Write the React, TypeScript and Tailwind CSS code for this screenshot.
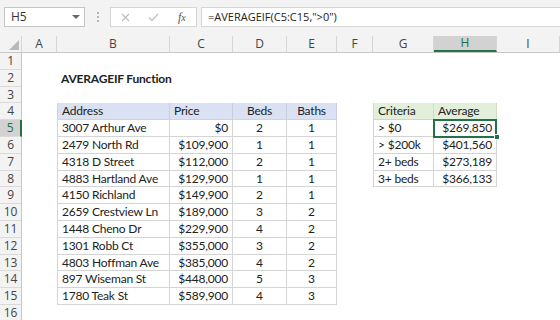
import React from "react";

const W = [22, 35, 113, 63, 54, 50, 36, 61, 63, 63];
const LETTERS = ["A", "B", "C", "D", "E", "F", "G", "H", "I"];

const data: [string, string, string, string][] = [
  ["3007 Arthur Ave", "$0", "2", "1"],
  ["2479 North Rd", "$109,900", "1", "1"],
  ["4318 D Street", "$112,000", "2", "1"],
  ["4883 Hartland Ave", "$129,900", "1", "1"],
  ["4150 Richland", "$149,900", "2", "1"],
  ["2659 Crestview Ln", "$189,000", "3", "2"],
  ["1448 Cheno Dr", "$229,900", "4", "2"],
  ["1301 Robb Ct", "$355,000", "3", "2"],
  ["4803 Hoffman Ave", "$385,000", "4", "2"],
  ["897 Wiseman St", "$448,000", "5", "3"],
  ["1780 Teak St", "$589,900", "4", "3"],
];

const crit: [string, string][] = [
  ["> $0", "$269,850"],
  ["> $200k", "$401,560"],
  ["2+ beds", "$273,189"],
  ["3+ beds", "$366,133"],
];

const font = { fontFamily: "Lato, 'Open Sans', sans-serif", letterSpacing: "-0.2px" };
const uiFont = { fontFamily: "'Open Sans', 'Noto Sans', sans-serif" };

const SHORT = new Set([3, 8, 13]);

function Cell({
  w,
  h,
  children,
  className = "",
}: {
  w: number;
  h: number;
  children?: React.ReactNode;
  className?: string;
}) {
  return (
    <div
      className={`shrink-0 flex items-center overflow-visible whitespace-nowrap text-[12px] text-[#222] ${className}`}
      style={{ width: w, height: h }}
    >
      {children}
    </div>
  );
}

function Row({ n }: { n: number }) {
  const h = SHORT.has(n) ? 16 : 17;
  const cells: React.ReactNode[] = [];
  const sel = n === 5;
  cells.push(
    <div
      key="rh"
      className={`shrink-0 flex items-center justify-center text-[12px] border-b border-[#dadada] ${
        sel ? "bg-[#d2d2d2] border-r-2 border-r-[#217346] text-[#217346]" : "bg-[#f3f3f3] border-r border-r-[#c6c6c6] text-[#444]"
      }`}
      style={{ width: W[0], height: h, ...uiFont }}
    >
      {n}
    </div>
  );
  cells.push(<Cell key="a" w={W[1]} h={h} />);
  const tb = "border-b border-r border-[#d4d4d4]";
  if (n === 2) {
    cells.push(
      <Cell key="b" w={W[2]} h={h} className="pl-[4px] font-bold">
        AVERAGEIF Function
      </Cell>
    );
    for (let i = 3; i <= 9; i++) cells.push(<Cell key={i} w={W[i]} h={h} />);
  } else if (n === 4) {
    const hb = "bg-[#d9e1f2] border-r border-[#c8cfdc] border-b border-b-[#d4d4d4]";
    cells.push(<Cell key="b" w={W[2]} h={h} className={`${hb} border-l border-l-[#d4d4d4] pl-[4px]`}>Address</Cell>);
    cells.push(<Cell key="c" w={W[3]} h={h} className={`${hb} pl-[4px]`}>Price</Cell>);
    cells.push(<Cell key="d" w={W[4]} h={h} className={`${hb} justify-center`}>Beds</Cell>);
    cells.push(<Cell key="e" w={W[5]} h={h} className={`${hb} justify-center`}>Baths</Cell>);
    cells.push(<Cell key="f" w={W[6]} h={h} />);
    const gb = "bg-[#e2efda] border-r border-[#cfdcc6] border-b border-b-[#d4d4d4]";
    cells.push(<Cell key="g" w={W[7]} h={h} className={`${gb} border-l border-l-[#d4d4d4] pl-[4px]`}>Criteria</Cell>);
    cells.push(<Cell key="h" w={W[8]} h={h} className={`${gb} pl-[4px]`}>Average</Cell>);
    cells.push(<Cell key="i" w={W[9]} h={h} />);
  } else if (n >= 5 && n <= 15) {
    const d = data[n - 5];
    cells.push(<Cell key="b" w={W[2]} h={h} className={`${tb} border-l pl-[4px]`}>{d[0]}</Cell>);
    cells.push(<Cell key="c" w={W[3]} h={h} className={`${tb} justify-end pr-[4px]`}>{d[1]}</Cell>);
    cells.push(<Cell key="d" w={W[4]} h={h} className={`${tb} justify-center`}>{d[2]}</Cell>);
    cells.push(<Cell key="e" w={W[5]} h={h} className={`${tb} justify-center`}>{d[3]}</Cell>);
    cells.push(<Cell key="f" w={W[6]} h={h} />);
    if (n <= 8) {
      const c = crit[n - 5];
      cells.push(<Cell key="g" w={W[7]} h={h} className={`${tb} border-l pl-[4px]`}>{c[0]}</Cell>);
      if (sel) {
        cells.push(
          <Cell key="h" w={W[8]} h={h} className={`${tb} relative justify-end pr-[4px]`}>
            <div className="absolute left-[-1px] top-[-1px] w-[64px] h-[19px] border-2 border-[#217346] pointer-events-none" />
            <div className="absolute right-[-4px] bottom-[-4px] w-[6px] h-[6px] bg-[#217346] border border-white z-10" />
            {c[1]}
          </Cell>
        );
      } else {
        cells.push(<Cell key="h" w={W[8]} h={h} className={`${tb} justify-end pr-[4px]`}>{c[1]}</Cell>);
      }
    } else {
      cells.push(<Cell key="g" w={W[7]} h={h} />);
      cells.push(<Cell key="h" w={W[8]} h={h} />);
    }
    cells.push(<Cell key="i" w={W[9]} h={h} />);
  } else {
    for (let i = 2; i <= 9; i++) cells.push(<Cell key={i} w={W[i]} h={h} />);
  }
  return <div className="flex" style={font}>{cells}</div>;
}

export default function App() {
  return (
    <div className="w-[560px] h-[320px] overflow-hidden bg-white">
      <div className="h-[36px] bg-[#f3f3f3] flex items-start pt-[7px] pl-[4px]" style={uiFont}>
        <div className="w-[81px] h-[20px] bg-white border border-[#c6c6c6] flex items-center justify-between pl-[6px] pr-[4px]">
          <span className="text-[12px] text-[#333]">H5</span>
          <svg width="8" height="5" viewBox="0 0 8 5">
            <path d="M0 0 L8 0 L4 4 Z" fill="#666" />
          </svg>
        </div>
        <div className="w-[25px] h-[20px] flex flex-col items-center justify-center gap-[2px]">
          <div className="w-[2px] h-[2px] bg-[#b5b5b5]" />
          <div className="w-[2px] h-[2px] bg-[#b5b5b5]" />
          <div className="w-[2px] h-[2px] bg-[#b5b5b5]" />
        </div>
        <div className="w-[87px] h-[20px] bg-white border border-[#d6d6d6] flex items-center">
          <div className="w-[29px] flex justify-center">
            <svg width="9" height="9" viewBox="0 0 9 9">
              <path d="M1 1 L8 8 M8 1 L1 8" stroke="#bcbcbc" strokeWidth="1.2" />
            </svg>
          </div>
          <div className="w-[29px] flex justify-center">
            <svg width="11" height="9" viewBox="0 0 11 9">
              <path d="M1 4.5 L4 7.5 L10 1" stroke="#bcbcbc" strokeWidth="1.2" fill="none" />
            </svg>
          </div>
          <div className="w-[29px] flex justify-center">
            <span className="text-[12px] italic text-[#555]" style={{ fontFamily: "'Liberation Serif', serif" }}>
              f<span className="text-[10px]">x</span>
            </span>
          </div>
        </div>
        <div className="ml-[4px] flex-1 h-[20px] bg-white border border-[#d6d6d6] border-r-0 flex items-center pl-[6px]">
          <span className="text-[11px] text-[#222]">=AVERAGEIF(C5:C15,"&gt;0")</span>
        </div>
      </div>
      <div className="flex h-[17px] bg-[#f3f3f3] border-b border-[#c6c6c6]" style={uiFont}>
        <div className="shrink-0 relative border-r border-[#d6d6d6]" style={{ width: W[0] }}>
          <svg className="absolute right-[2px] bottom-[2px]" width="10" height="10" viewBox="0 0 10 10">
            <path d="M10 0 L10 10 L0 10 Z" fill="#b9b9b9" />
          </svg>
        </div>
        {LETTERS.map((l, i) => {
          const sel = l === "H";
          return (
            <div
              key={l}
              className={`shrink-0 flex items-center justify-center text-[12px] border-r border-[#d6d6d6] ${
                sel ? "bg-[#d2d2d2] border-b-2 border-b-[#217346] text-[#217346]" : "text-[#444]"
              }`}
              style={{ width: W[i + 1] }}
            >
              {l}
            </div>
          );
        })}
      </div>
      {Array.from({ length: 16 }, (_, i) => (
        <Row key={i} n={i + 1} />
      ))}
    </div>
  );
}
